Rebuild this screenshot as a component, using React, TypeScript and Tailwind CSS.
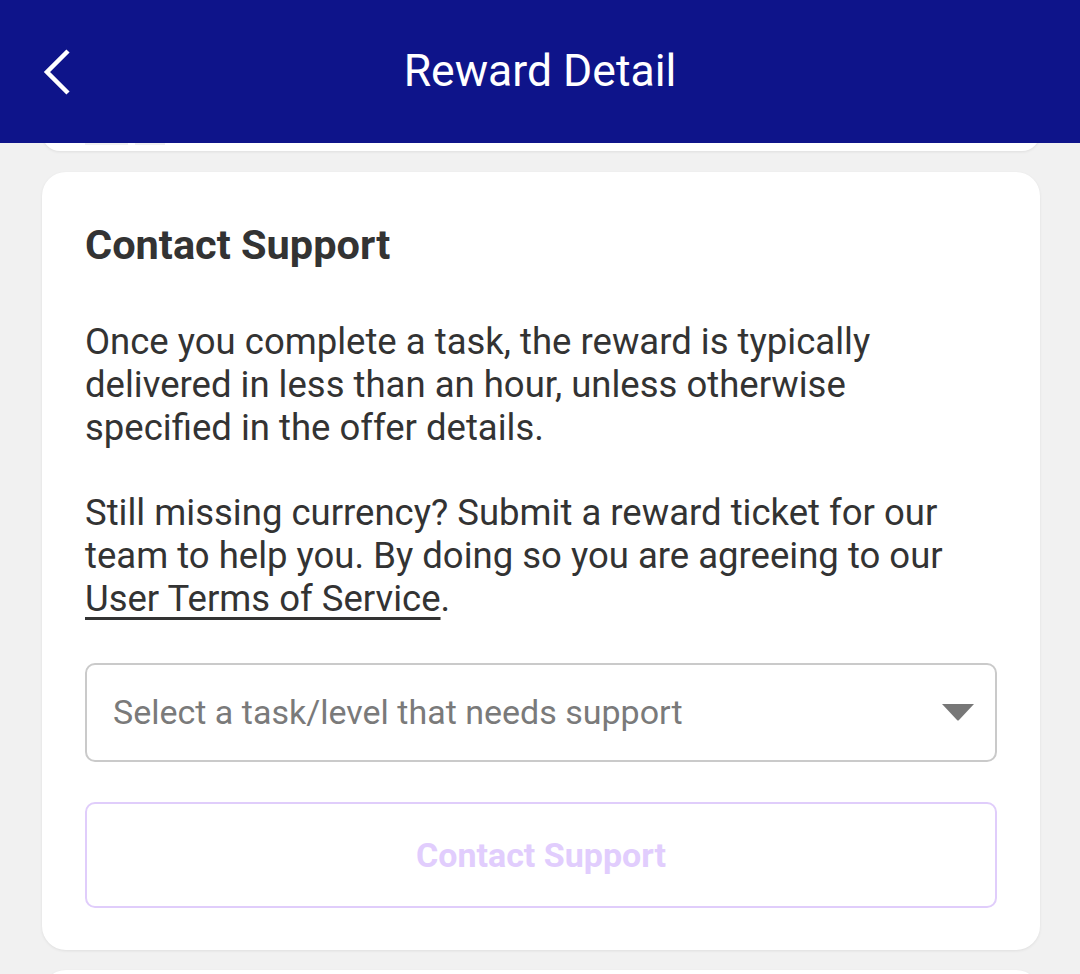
import React from 'react';

const BackIcon = () => (
  <svg width="30" height="46" viewBox="0 0 30 46" fill="none">
    <path d="M26 2 L5 23 L26 44" stroke="white" strokeWidth="4.5" strokeLinecap="butt" />
  </svg>
);

export default function App() {
  return (
    <div className="h-[974px] overflow-hidden bg-[#f1f1f1] font-['Roboto',sans-serif]">
      <header className="relative z-10 flex h-[143px] items-center bg-[#0e148a] px-[42px]">
        <button className="flex h-[46px] w-[30px] items-center">
          <BackIcon />
        </button>
        <h1 className="flex-1 pr-[30px] text-center text-[44.5px] text-white">Reward Detail</h1>
      </header>

      {/* bottom edge of the card above */}
      <div className="ml-[42px] mr-[40px] -mt-[10px] h-[18px] rounded-b-[24px] bg-white px-[43px] shadow-[0_1px_3px_rgba(0,0,0,0.08)]">
        <div className="flex gap-[7px]">
          <div className="h-[12px] w-[43px] bg-[#f0f0f0]" />
          <div className="h-[12px] w-[30px] bg-[#f0f0f0]" />
        </div>
      </div>

      <div className="ml-[42px] mr-[40px] mt-[21px] rounded-[24px] bg-white px-[43px] pb-[42px] pt-[48px] text-[#333333] shadow-[0_1px_3px_rgba(0,0,0,0.08)]">
        <h2 className="text-[41.5px] font-bold leading-[50px]">Contact Support</h2>
        <p className="mt-[50px] text-[36.5px] leading-[43px]">
          Once you complete a task, the reward is typically delivered in less than an hour, unless otherwise specified in the offer details.
        </p>
        <p className="mt-[42px] text-[36.5px] leading-[43px]">
          Still missing currency? Submit a reward ticket for our team to help you. By doing so you are agreeing to our{' '}
          <span className="underline decoration-[2.5px] underline-offset-[6px]">User Terms of Service</span>.
        </p>
        <div className="mt-[43px] flex h-[99px] items-center justify-between rounded-[10px] border-2 border-[#cacaca] pl-[26px] pr-[21px]">
          <span className="text-[34px] text-[#7a7a7a]">Select a task/level that needs support</span>
          <svg width="32" height="17" viewBox="0 0 32 17">
            <path d="M0 0 H32 L17 16 Q16 17 15 16 Z" fill="#777777" />
          </svg>
        </div>
        <button className="mt-[40px] flex h-[106px] w-full items-center justify-center rounded-[10px] border-2 border-[#e0cdfb] text-[34px] font-bold text-[#e1cdfd]">
          Contact Support
        </button>
      </div>

      <div className="ml-[42px] mr-[40px] mt-[20px] h-[40px] rounded-t-[24px] bg-white shadow-[0_1px_3px_rgba(0,0,0,0.08)]" />
    </div>
  );
}
